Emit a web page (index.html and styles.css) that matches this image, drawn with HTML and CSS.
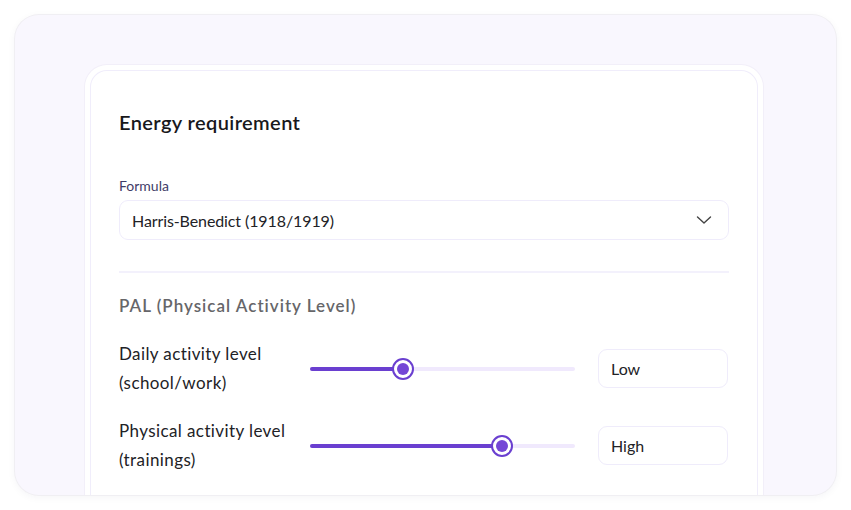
FILE: index.html
```html
<!DOCTYPE html>
<html lang="en">
<head>
<meta charset="utf-8">
<title>Energy requirement</title>
<link rel="stylesheet" href="styles.css">
</head>
<body>
<div class="panel">
  <div class="card">
    <div class="card-inner">
      <h2 class="title">Energy requirement</h2>

      <div class="field">
        <label class="field-label">Formula</label>
        <div class="select">
          <span>Harris-Benedict (1918/1919)</span>
          <svg class="chevron" width="16" height="10" viewBox="0 0 16 10"><path d="M1.5 2 L8 8 L14.5 2" fill="none" stroke="#444" stroke-width="1.4" stroke-linecap="round" stroke-linejoin="round"/></svg>
        </div>
      </div>

      <div class="divider"></div>

      <h3 class="section">PAL (Physical Activity Level)</h3>

      <div class="row">
        <div class="row-label">Daily activity level<br>(school/work)</div>
        <div class="slider">
          <div class="track"><div class="fill" style="width:35%"></div><div class="thumb" style="left:35%"></div></div>
        </div>
        <div class="value">Low</div>
      </div>

      <div class="row">
        <div class="row-label">Physical activity level<br>(trainings)</div>
        <div class="slider">
          <div class="track"><div class="fill" style="width:72.4%"></div><div class="thumb" style="left:72.4%"></div></div>
        </div>
        <div class="value">High</div>
      </div>

      <div class="divider bottom"></div>
    </div>
  </div>
</div>
</body>
</html>
```

FILE: styles.css
```css
* { box-sizing: border-box; }
html, body { margin: 0; padding: 0; background: #ffffff; }
body {
  font-family: Lato, "Open Sans", sans-serif;
  color: #1e1e24;
  width: 851px;
  height: 510px;
  overflow: hidden;
}
.panel {
  margin: 15px;
  width: 821px;
  height: 480px;
  background: #f9f7fe;
  border-radius: 24px;
  box-shadow: 0 0 0 1px #f0eff3, 0 2px 8px rgba(40, 30, 80, 0.05);
  overflow: hidden;
  padding: 50px 73px 0 70px;
}
.card {
  background: #ffffff;
  border-radius: 22px;
  padding: 5px;
  box-shadow: 0 0 0 1px #f2eff9;
}
.card-inner {
  border: 1px solid #f0edfb;
  border-bottom: none;
  border-radius: 17px 17px 0 0;
  padding: 39px 28px 40px 28px;
}
.title {
  margin: 0;
  font-size: 20px;
  line-height: 24px;
  font-weight: 600;
  letter-spacing: 0.4px;
  color: #18181c;
}
.field { margin-top: 44px; }
.field-label {
  display: block;
  font-size: 14px;
  line-height: 16px;
  color: #3f3c68;
  margin-bottom: 6px;
}
.select {
  height: 40px;
  border: 1px solid #efecfb;
  border-radius: 9px;
  display: flex;
  align-items: center;
  justify-content: space-between;
  padding: 0 16px 0 12px;
  font-size: 16px;
  letter-spacing: -0.1px;
  color: #222226;
}
.divider {
  height: 2px;
  background: #f3f1fc;
  margin-top: 31px;
}
.section {
  margin: 22px 0 0 0;
  font-size: 17px;
  line-height: 22px;
  font-weight: 600;
  color: #666669;
  letter-spacing: 1px;
}
.row {
  display: flex;
  align-items: center;
  margin-top: 22px;
}
.row + .row { margin-top: 19px; }
.row-label {
  width: 191px;
  font-size: 17px;
  line-height: 29px;
  letter-spacing: 0.4px;
  color: #222226;
  white-space: nowrap;
}
.slider {
  width: 265px;
  margin-right: 23px;
  margin-top: 2px;
}
.track {
  position: relative;
  height: 4px;
  border-radius: 2px;
  background: #f0e9fd;
}
.fill {
  height: 4px;
  border-radius: 2px;
  background: #6a3fd0;
}
.thumb {
  position: absolute;
  top: 50%;
  width: 22px;
  height: 22px;
  margin: -11px 0 0 -11px;
  border-radius: 50%;
  border: 2px solid #6a3fd0;
  background: #ffffff;
}
.thumb::after {
  content: "";
  position: absolute;
  left: 3px;
  top: 3px;
  width: 12px;
  height: 12px;
  border-radius: 50%;
  background: #7446d6;
}
.value {
  width: 130px;
  height: 39px;
  border: 1px solid #efecfb;
  border-radius: 9px;
  display: flex;
  align-items: center;
  padding-left: 12px;
  font-size: 16px;
  color: #222226;
}
.divider.bottom {
  margin-top: 26px;
  margin-left: 6px;
  margin-right: 8px;
}
```
